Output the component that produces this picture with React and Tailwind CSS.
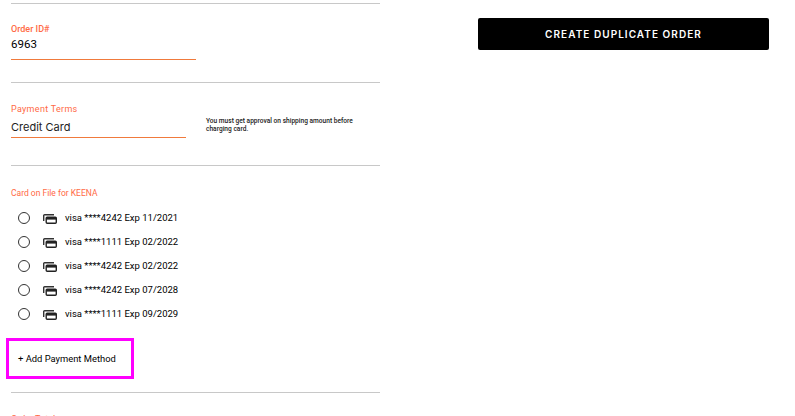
const cards = [
  { id: 1, text: "visa ****4242 Exp 11/2021" },
  { id: 2, text: "visa ****1111 Exp 02/2022" },
  { id: 3, text: "visa ****4242 Exp 02/2022" },
  { id: 4, text: "visa ****4242 Exp 07/2028" },
  { id: 5, text: "visa ****1111 Exp 09/2029" },
];

const CardsIcon = () => (
  <svg width="14" height="10" viewBox="0 0 14 10" className="block shrink-0">
    <path d="M0.7 7V1.6C0.7 1 1.1 0.7 1.6 0.7H11" fill="none" stroke="#333" strokeWidth="1.4" />
    <rect x="3.2" y="3.2" width="10.1" height="6.1" rx="1" fill="#fff" stroke="#222" strokeWidth="1.4" />
    <rect x="3.2" y="3.2" width="10.1" height="2.4" fill="#222" />
  </svg>
);

const Divider = () => <div className="h-px bg-[#c8c8c8]" />;

const App = () => {
  return (
    <div className="flex h-[416px] overflow-hidden bg-white font-['Roboto',sans-serif] text-black">
      <div className="ml-[11px] w-[369px] shrink-0 pt-[3px]">
        <Divider />

        <div className="h-[78px] pt-[20px]">
          <div className="text-[9px] font-medium leading-[11px] text-[#ff6a45]">Order ID#</div>
          <div className="h-[25px] w-[185px] border-b border-[#f07a3c] text-[11.5px] leading-[18px]">6963</div>
        </div>
        <Divider />

        <div className="flex h-[82px] pt-[21px]">
          <div className="w-[175px]">
            <div className="text-[9px] leading-[11px] tracking-[0.3px] text-[#ff6a45]">Payment Terms</div>
            <div className="mt-[5px] h-[18px] border-b border-[#f07a3c] font-['Inter',sans-serif] text-[11px] leading-[15px] text-[#222]">Credit Card</div>
          </div>
          <div className="ml-[20px] mt-[13px] w-[160px] text-[6.6px] font-medium leading-[8px] text-[#222]">
            You must get approval on shipping amount before charging card.
          </div>
        </div>
        <Divider />

        <div className="pt-[22px] text-[8.5px] leading-[10px] text-[#ff6a45]">Card on File for KEENA</div>
        <div className="mt-[8px] flex flex-col">
          {cards.map((card) => (
            <div key={card.id} className="flex h-[24px] items-center pl-[7px]">
              <span className="h-[12px] w-[12px] rounded-full border border-[#333]" />
              <span className="ml-[13px] mt-[1px]"><CardsIcon /></span>
              <span className="ml-[8px] text-[9.5px]">{card.text}</span>
            </div>
          ))}
        </div>

        <button className="-ml-[5px] mt-[12px] block h-[41px] w-[128px] border-[3px] border-[#ff00ff] pl-[9px] pt-[1px] text-left text-[9.4px]">
          + Add Payment Method
        </button>
        <div className="mt-[13px]"><Divider /></div>
        <div className="mt-[21px] text-[9px] leading-[11px] text-[#ff6a45]">Order Total</div>
      </div>

      <div className="ml-[98px] pt-[18px]">
        <button className="h-[32px] w-[291px] rounded-[2px] bg-black font-['Inter',sans-serif] text-[10px] font-semibold tracking-[1.05px] text-white">
          CREATE DUPLICATE ORDER
        </button>
      </div>
    </div>
  );
};

export default App;
